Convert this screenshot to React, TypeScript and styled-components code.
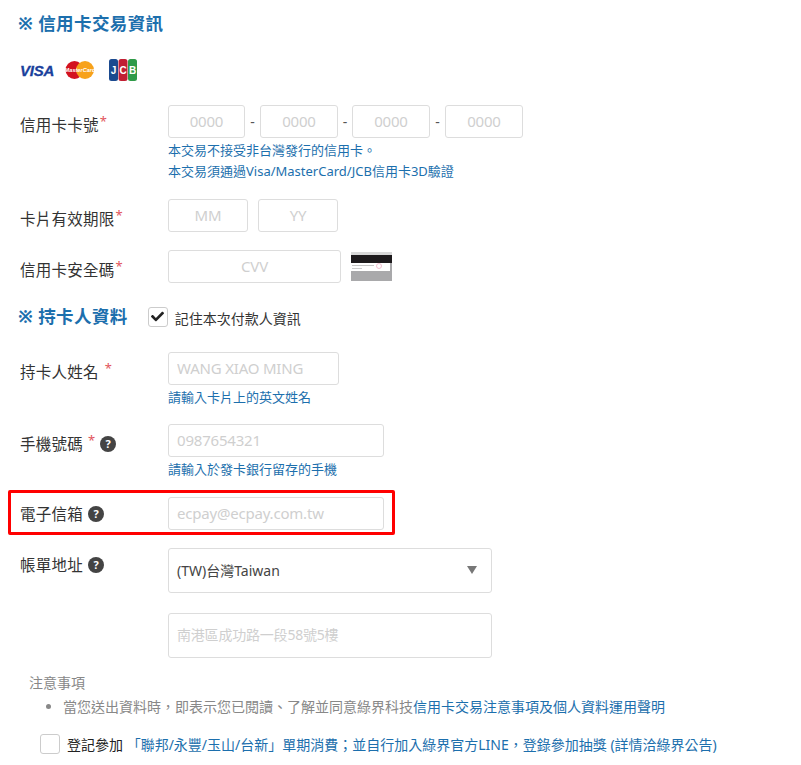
import React from 'react';
import styled, { createGlobalStyle } from 'styled-components';
import { FaCheck } from 'react-icons/fa';

const GlobalStyle = createGlobalStyle`
	html, body {
		margin: 0;
		padding: 0;
		background: #fff;
		font-family: 'Noto Sans', 'Noto Sans CJK TC', sans-serif;
	}
	* {
		box-sizing: border-box;
	}
`;

const Page = styled.div`
	width: 801px;
	height: 765px;
	overflow: hidden;
	padding: 12px 0 0 20px;
`;

const SectionTitle = styled.h2`
	margin: 0 0 0 -2px;
	font-size: 17.5px;
	line-height: 23px;
	font-weight: 700;
	color: #1c6fad;
	letter-spacing: 0.4px;
	white-space: nowrap;
`;

const Logos = styled.div`
	display: flex;
	align-items: center;
	height: 24px;
	margin: 23px 0 23px;
`;

const VisaMark = styled.span`
	width: 45px;
	font-family: 'Liberation Sans', sans-serif;
	font-size: 15px;
	font-weight: 700;
	font-style: italic;
	color: #1a3f9c;
	letter-spacing: -0.2px;
	-webkit-text-stroke: 0.3px #1a3f9c;
`;

const McIcon = styled.svg`
	width: 30px;
	height: 20px;
	margin-right: 14px;
`;

const JcbIcon = styled.svg`
	width: 28px;
	height: 22px;
`;

const Row = styled.div<{ $gap: number }>`
	display: grid;
	grid-template-columns: 148px auto;
	justify-content: start;
	margin-bottom: ${p => p.$gap}px;
`;

const Label = styled.div<{ $top?: number }>`
	display: flex;
	align-items: flex-start;
	padding-top: ${p => p.$top ?? 9}px;
	font-size: 15.5px;
	line-height: 22px;
	letter-spacing: 0.25px;
	color: #333;
	white-space: nowrap;
`;

const Required = styled.span<{ $left?: number }>`
	margin: -4px 0 0 ${p => p.$left ?? 1}px;
	color: #e2545c;
	font-size: 13px;
	letter-spacing: 0;
`;

const HelpBadge = styled.span<{ $left?: number }>`
	display: inline-flex;
	align-items: center;
	justify-content: center;
	width: 16px;
	height: 16px;
	margin: 3px 0 0 ${p => p.$left ?? 5}px;
	border-radius: 50%;
	background: #444;
	color: #fff;
	font-size: 11px;
	font-weight: 700;
	letter-spacing: 0;
`;

const FieldLine = styled.div`
	display: flex;
	align-items: center;
`;

const TextField = styled.input<{ $w: number; $h?: number; $center?: boolean; $size?: number }>`
	display: block;
	width: ${p => p.$w}px;
	height: ${p => p.$h ?? 33}px;
	padding: 0 8px 2px;
	border: 1px solid #ddd;
	border-radius: 3px;
	background: #fff;
	outline: none;
	font-family: inherit;
	font-size: ${p => p.$size ?? 15}px;
	text-align: ${p => (p.$center ? 'center' : 'left')};
	letter-spacing: -0.2px;
	&::placeholder {
		color: #cfcfcf;
		opacity: 1;
	}
`;

const Dash = styled.span<{ $w?: number }>`
	width: ${p => p.$w ?? 15}px;
	text-align: center;
	font-size: 14px;
	color: #555;
`;

const Spacer = styled.div<{ $w: number }>`
	width: ${p => p.$w}px;
	flex: none;
`;

const Hint = styled.div<{ $top?: number }>`
	margin-top: ${p => p.$top ?? 0}px;
	font-size: 13px;
	line-height: 21px;
	color: #1c6fad;
	white-space: nowrap;
`;

const CvvIcon = styled.svg`
	width: 41px;
	height: 29px;
	margin-left: 10px;
`;

const HolderHead = styled.div`
	display: flex;
	align-items: center;
	height: 23px;
	margin-bottom: 24px;
`;

const CheckBox = styled.span<{ $ml: number }>`
	display: inline-flex;
	flex: none;
	align-items: center;
	justify-content: center;
	width: 20px;
	height: 20px;
	margin-left: ${p => p.$ml}px;
	border: 1px solid #ccc;
	border-radius: 3px;
	background: #fff;
	color: #222;
	font-size: 13px;
`;

const RememberText = styled.span`
	margin-left: 7px;
	padding-top: 3px;
	font-size: 14px;
	color: #333;
	white-space: nowrap;
`;

const EmailBox = styled.div`
	display: grid;
	grid-template-columns: 148px auto;
	justify-content: start;
	width: 387px;
	height: 45px;
	margin: 0 0 13px -12px;
	padding: 4px 0 0 9px;
	border: 3px solid #f00;
	border-radius: 2px;
`;

const SelectBox = styled.div`
	display: flex;
	align-items: center;
	justify-content: space-between;
	width: 324px;
	height: 45px;
	margin-bottom: 20px;
	padding: 0 14px 2px 8px;
	border: 1px solid #ddd;
	border-radius: 3px;
	font-size: 14px;
	color: #444;
`;

const SelectArrow = styled.span`
	width: 0;
	height: 0;
	border-left: 5.5px solid transparent;
	border-right: 5.5px solid transparent;
	border-top: 8px solid #777;
`;

const Notes = styled.div`
	margin: 15px 0 0 9px;
	font-size: 14px;
	color: #888;
`;

const NotesTitle = styled.div`
	line-height: 20px;
`;

const NotesList = styled.ul`
	margin: 4px 0 0;
	padding: 0 0 0 34px;
	line-height: 20px;
	white-space: nowrap;
`;

const NoteLink = styled.span`
	color: #1c6fad;
`;

const Agree = styled.div`
	display: flex;
	align-items: center;
	margin-top: 17px;
	font-size: 14px;
	white-space: nowrap;
	color: #222;
`;

const AgreeText = styled.span`
	margin-left: 7px;
`;

export default function App() {
	return (
		<Page>
			<GlobalStyle />
			<SectionTitle>※ 信用卡交易資訊</SectionTitle>
			<Logos>
				<VisaMark>VISA</VisaMark>
				<McIcon viewBox="0 0 30 20">
					<circle cx="9.5" cy="10" r="9" fill="#d3121f" />
					<circle cx="20" cy="10" r="9" fill="#f7a21b" />
					<text x="15" y="12" textAnchor="middle" fontFamily="Liberation Sans" fontSize="5.6" fontWeight="700" fontStyle="italic" fill="#fff">
						MasterCard
					</text>
				</McIcon>
				<JcbIcon viewBox="0 0 28 22">
					<rect x="0" y="0" width="9" height="22" rx="2.5" fill="#1b4a8f" />
					<rect x="9.5" y="0" width="9" height="22" rx="2.5" fill="#c11f33" />
					<rect x="19" y="0" width="9" height="22" rx="2.5" fill="#2f9a48" />
					<g fontFamily="Liberation Sans" fontSize="10" fontWeight="700" fill="#fff" textAnchor="middle">
						<text x="4.5" y="15">J</text>
						<text x="14" y="15">C</text>
						<text x="23.5" y="15">B</text>
					</g>
				</JcbIcon>
			</Logos>

			<Row $gap={17}>
				<Label>
					信用卡卡號<Required>*</Required>
				</Label>
				<div>
					<FieldLine>
						<TextField $w={77} $center placeholder="0000" readOnly />
						<Dash>-</Dash>
						<TextField $w={78} $center placeholder="0000" readOnly />
						<Dash $w={14}>-</Dash>
						<TextField $w={78} $center placeholder="0000" readOnly />
						<Dash>-</Dash>
						<TextField $w={78} $center placeholder="0000" readOnly />
					</FieldLine>
					<Hint $top={2}>本交易不接受非台灣發行的信用卡。</Hint>
					<Hint>本交易須通過Visa/MasterCard/JCB信用卡3D驗證</Hint>
				</div>
			</Row>

			<Row $gap={18}>
				<Label>
					卡片有效期限<Required>*</Required>
				</Label>
				<FieldLine>
					<TextField $w={80} $center placeholder="MM" readOnly />
					<Spacer $w={10} />
					<TextField $w={80} $center placeholder="YY" readOnly />
				</FieldLine>
			</Row>

			<Row $gap={22}>
				<Label>
					信用卡安全碼<Required>*</Required>
				</Label>
				<FieldLine>
					<TextField $w={173} $center placeholder="CVV" readOnly />
					<CvvIcon viewBox="0 0 41 29">
						<rect width="41" height="29" fill="#a9a9ab" />
						<rect width="41" height="3" fill="#d8d8d8" />
						<rect y="3" width="41" height="8" fill="#1d1a1c" />
						<rect y="11" width="39" height="8" fill="#fff" />
						<rect x="1" y="13" width="22" height="1" fill="#c4c4c4" />
						<rect x="1" y="16" width="10" height="1" fill="#ccc" />
						<circle cx="28" cy="14" r="2.5" fill="none" stroke="#eeb0c4" strokeWidth="0.8" />
					</CvvIcon>
				</FieldLine>
			</Row>

			<HolderHead>
				<SectionTitle>※ 持卡人資料</SectionTitle>
				<CheckBox $ml={20}>
					<FaCheck />
				</CheckBox>
				<RememberText>記住本次付款人資訊</RememberText>
			</HolderHead>

			<Row $gap={16}>
				<Label>
					持卡人姓名<Required $left={6}>*</Required>
				</Label>
				<div>
					<TextField $w={171} placeholder="WANG XIAO MING" readOnly />
					<Hint $top={2}>請輸入卡片上的英文姓名</Hint>
				</div>
			</Row>

			<Row $gap={10}>
				<Label>
					手機號碼<Required $left={5}>*</Required>
					<HelpBadge>?</HelpBadge>
				</Label>
				<div>
					<TextField $w={216} placeholder="0987654321" readOnly />
					<Hint $top={2}>請輸入於發卡銀行留存的手機</Hint>
				</div>
			</Row>

			<EmailBox>
				<Label $top={6}>
					電子信箱
					<HelpBadge>?</HelpBadge>
				</Label>
				<TextField $w={216} placeholder="ecpay@ecpay.com.tw" readOnly />
			</EmailBox>

			<Row $gap={0}>
				<Label $top={6}>
					帳單地址
					<HelpBadge>?</HelpBadge>
				</Label>
				<div>
					<SelectBox>
						(TW)台灣Taiwan
						<SelectArrow />
					</SelectBox>
					<TextField $w={324} $h={45} $size={14} placeholder="南港區成功路一段58號5樓" readOnly />
				</div>
			</Row>

			<Notes>
				<NotesTitle>注意事項</NotesTitle>
				<NotesList>
					<li>
						當您送出資料時，即表示您已閱讀、了解並同意綠界科技
						<NoteLink>信用卡交易注意事項及個人資料運用聲明</NoteLink>
					</li>
				</NotesList>
			</Notes>

			<Agree>
				<CheckBox $ml={20} />
				<AgreeText>
					登記參加
					<NoteLink> 「聯邦/永豐/玉山/台新」單期消費；並自行加入綠界官方LINE，登錄參加抽獎 (詳情洽綠界公告)</NoteLink>
				</AgreeText>
			</Agree>
		</Page>
	);
}
